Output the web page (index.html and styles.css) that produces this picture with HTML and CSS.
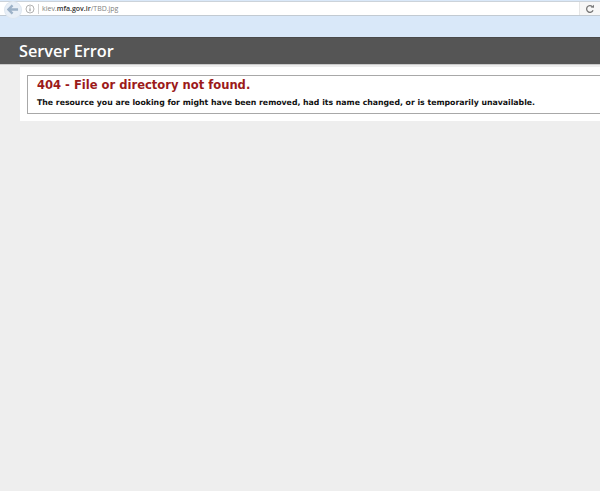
FILE: index.html
```html
<!DOCTYPE html>
<html lang="en">
<head>
<meta charset="utf-8">
<title>404 - File or directory not found.</title>
<link rel="stylesheet" href="styles.css">
</head>
<body>
<div class="chrome">
  <div class="urlbar">
    <div class="back">
      <svg width="12" height="11" viewBox="0 0 13 12"><path d="M6 1.500 1.500 6 6 10.500M2 6h10" fill="none" stroke="#9db2c8" stroke-width="2.600"/></svg>
    </div>
    <svg class="info" width="10" height="10" viewBox="0 0 10 10"><circle cx="5" cy="5" r="4" fill="#fff" stroke="#a0a0a0" stroke-width="0.800"/><path d="M5 4.300v3M5 2.400v1" stroke="#8a8a8a" stroke-width="1"/></svg>
    <div class="sep"></div>
    <div class="url">kiev.<b>mfa.gov.ir</b>/TBD.jpg</div>
    <div class="reload">
      <svg width="10" height="10" viewBox="0 0 10 10"><path d="M8 6.200A3.300 3.300 0 1 1 7.300 2.700" fill="none" stroke="#777" stroke-width="1.300"/><path d="M5.800 3.600 9 3.800V.8z" fill="#777"/></svg>
    </div>
  </div>
</div>
<header class="header"><h1>Server Error</h1></header>
<main class="content">
  <div class="panel">
    <div class="box">
      <h2>404 - File or directory not found.</h2>
      <h3>The resource you are looking for might have been removed, had its name changed, or is temporarily unavailable.</h3>
    </div>
  </div>
</main>
</body>
</html>
```
FILE: styles.css
```css
html, body { margin: 0; height: 100%; }
body { background: #eeeeee; overflow: hidden; font-family: "DejaVu Sans", Verdana, sans-serif; }

.chrome { height: 37px; box-sizing: border-box; padding-top: 1px; background: #d9e8f9; }
.urlbar { height: 13px; display: flex; align-items: center; background: #fff; border-top: 1px solid #ccd3da; border-bottom: 1px solid #c2cad2; }
.back { width: 16px; height: 16px; margin-left: 5px; margin-top: 2px; border-radius: 50%; background: #e8eff7; box-shadow: 0 0 0 1px #dde6f0; display: flex; align-items: center; justify-content: center; flex: none; }
.info { margin-left: 4px; flex: none; }
.sep { width: 1px; height: 10px; margin-left: 3px; background: #d0d0d0; flex: none; }
.url { margin-left: 3px; font: 7px/13px "Open Sans", sans-serif; color: #808080; flex: 1; white-space: nowrap; }
.url b { color: #333; font-weight: 600; }
.reload { width: 20px; height: 13px; border-left: 1px solid #e6e6e6; background: #f7f7f7; display: flex; align-items: center; justify-content: center; flex: none; }

.header { height: 26px; background: #555555; border-top: 1px solid #4a4a4a; border-bottom: 1px solid #c9c9c9; padding-left: 19px; }
.header h1 { margin: 0; font: 600 16.300px/26px "Open Sans", sans-serif; color: #fff; }

.content { padding: 2px 0 0 20px; }
.panel { background: #fff; padding: 8px 0 7px 7px; }
.box { height: 37px; border: 1px solid #a8a8a8; border-right: none; padding-left: 9px; }
.box h2 { margin: 0; padding-top: 1px; font-size: 11.550px; line-height: 16px; font-weight: 700; color: #9c1a1a; white-space: nowrap; }
.box h3 { margin: 4px 0 0; font-size: 7.770px; line-height: 12px; font-weight: 700; color: #111; white-space: nowrap; }
```
